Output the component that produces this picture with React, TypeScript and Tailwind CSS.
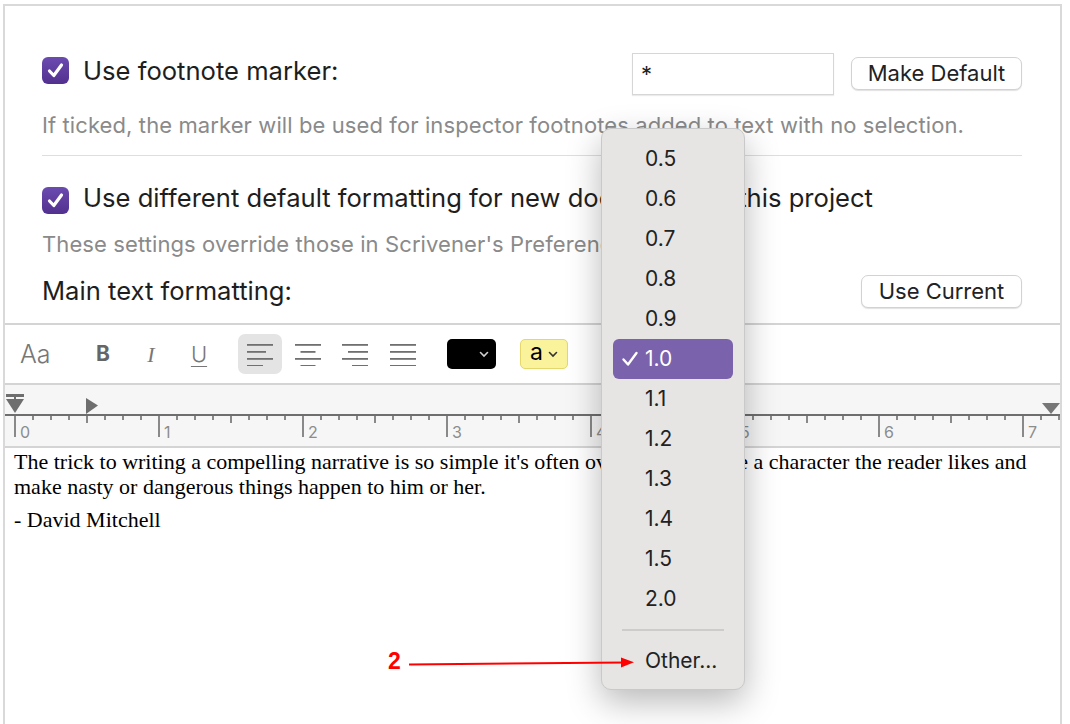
import React from 'react';

const ui = { fontFamily: 'Inter, "Noto Sans", sans-serif' };
const serif = { fontFamily: '"Liberation Serif", "DejaVu Serif", serif' };

const Checkbox = () => (
  <div className="w-[27px] h-[27px] rounded-[6px] bg-gradient-to-b from-[#6b4bb0] to-[#52308f] flex items-center justify-center shrink-0">
    <svg width="19" height="19" viewBox="0 0 19 19">
      <path d="M3.5 10 L7.8 14.5 L15.5 4" fill="none" stroke="white" strokeWidth="3.2" strokeLinecap="round" strokeLinejoin="round" />
    </svg>
  </div>
);

const MacButton = ({ label, w }: { label: string; w: string }) => (
  <div className={`${w} h-[33px] rounded-[7px] bg-white border border-[#d2d2d2] shadow-[0_1px_1px_rgba(0,0,0,0.12)] flex items-center justify-center text-[22px] text-[#222]`}>
    {label}
  </div>
);

// widths of the four lines in each alignment glyph
const AlignIcon = ({ kind }: { kind: 'left' | 'center' | 'right' | 'justify' }) => {
  const widths = {
    left: [26, 19, 26, 16],
    center: [26, 15, 26, 15],
    right: [26, 20, 26, 16],
    justify: [26, 26, 26, 26],
  }[kind];
  return (
    <svg width="26" height="23" viewBox="0 0 26 23">
      {widths.map((w, i) => {
        const x = kind === 'left' || kind === 'justify' ? 0 : kind === 'right' ? 26 - w : (26 - w) / 2;
        return <rect key={i} x={x} y={1 + i * 7} width={w} height="1.8" fill="#707070" />;
      })}
    </svg>
  );
};

const Ruler = () => {
  const origin = 10;
  const inch = 144;
  const ticks = [];
  for (let i = 0; i * 18 + origin < 1055; i++) {
    const x = origin + i * 18;
    const len = i % 8 === 0 ? 22 : i % 4 === 0 ? 8 : 5;
    ticks.push(<rect key={i} x={x - 0.8} y={30} width="1.6" height={len} fill="#6e6e6e" />);
  }
  const labels = [0, 1, 2, 3, 4, 5, 6, 7];
  return (
    <svg width="1055" height="61" viewBox="0 0 1055 61" className="block">
      <rect x="0" y="29" width="1055" height="2" fill="#6e6e6e" />
      {ticks}
      {labels.map((n) => (
        <text key={n} x={origin + n * inch + 5} y="53" fontSize="16" fill="#8c8c8c" fontFamily="Inter, sans-serif">
          {n}
        </text>
      ))}
      {/* tab / left indent marker */}
      <rect x="1" y="9" width="18" height="3" fill="#6e6e6e" />
      <rect x="9" y="11" width="2" height="4" fill="#6e6e6e" />
      <path d="M1 14 L19 14 L10 28 Z" fill="#6e6e6e" />
      {/* first line indent */}
      <path d="M81 13 L93 20.5 L81 29 Z" fill="#6e6e6e" />
      {/* right margin */}
      <path d="M1037 18 L1055 18 L1046 29 Z" fill="#777" />
    </svg>
  );
};

const MenuItem = ({ label, selected }: { label: string; selected?: boolean }) =>
  selected ? (
    <div className="mx-[11px] h-[40px] rounded-[6px] bg-[#7b62ac] flex items-center pl-[8px] text-white text-[21px]">
      <svg width="18" height="18" viewBox="0 0 18 18" className="mr-[6px]">
        <path d="M2.5 9.5 L7 14.5 L15.5 3" fill="none" stroke="white" strokeWidth="2.4" strokeLinecap="round" strokeLinejoin="round" />
      </svg>
      {label}
    </div>
  ) : (
    <div className="h-[40px] flex items-center pl-[43px] text-[21px] text-[#222]">{label}</div>
  );

export default function App() {
  const values = ['0.5', '0.6', '0.7', '0.8', '0.9', '1.0', '1.1', '1.2', '1.3', '1.4', '1.5', '2.0'];

  return (
    <div className="relative w-[1070px] h-[724px] overflow-hidden bg-white" style={ui}>
      <div className="ml-[3px] mt-[4px] w-[1059px] h-[760px] border-2 border-[#d9d9d9]">
        {/* project settings */}
        <div className="pl-[37px] pr-[38px] pt-[47px] pb-[15px]">
          <div className="flex items-center h-[42px]">
            <div className="flex items-center -mt-[6px]">
              <Checkbox />
              <span className="ml-[14px] text-[25.6px] text-[#1e1e1e]">Use footnote marker:</span>
            </div>
            <div className="ml-auto w-[202px] h-[42px] bg-white border border-[#d6d6d6] shadow-[0_1px_1px_rgba(0,0,0,0.08)] flex items-center pl-[8px] text-[22px] text-[#222]">
              *
            </div>
            <div className="ml-[17px] -mt-[2px]">
              <MacButton label="Make Default" w="w-[171px]" />
            </div>
          </div>
          <div className="mt-[18px] h-[24px] leading-[24px] text-[22px] tracking-[0.1px] text-[#8a8a8a] whitespace-nowrap">
            If ticked, the marker will be used for inspector footnotes added to text with no selection.
          </div>
          <div className="mt-[18px] h-px bg-[#dedede]" />
          <div className="mt-[30px] flex items-center h-[28px]">
            <Checkbox />
            <span className="ml-[14px] -mt-[3px] text-[25.6px] text-[#1e1e1e] whitespace-nowrap">
              Use different default formatting for new documents in this project
            </span>
          </div>
          <div className="mt-[18px] h-[24px] leading-[24px] text-[22px] tracking-[0.1px] text-[#8a8a8a] whitespace-nowrap">
            These settings override those in Scrivener's Preferences.
          </div>
          <div className="mt-[19px] flex items-center h-[33px]">
            <span className="text-[25.6px] text-[#1e1e1e]">Main text formatting:</span>
            <div className="ml-auto">
              <MacButton label="Use Current" w="w-[161px]" />
            </div>
          </div>
        </div>

        {/* format bar */}
        <div className="border-t-2 border-b-2 border-[#d4d4d4] h-[62px] flex items-center">
          <div className="ml-[15px] w-[32px] text-[25px] text-[#777] font-light leading-none">Aa</div>
          <div className="ml-[36px] w-[30px] text-center text-[21px] font-bold text-[#666]">B</div>
          <div className="ml-[18px] w-[30px] text-center text-[22px] italic font-light text-[#777]" style={serif}>I</div>
          <div className="ml-[18px] w-[30px] text-center text-[22px] font-light text-[#777] underline underline-offset-4 decoration-1">U</div>
          <div className="ml-[24px] w-[44px] h-[40px] rounded-[7px] bg-[#e4e4e4] flex items-center justify-center">
            <AlignIcon kind="left" />
          </div>
          <div className="ml-[4px] w-[44px] flex justify-center">
            <AlignIcon kind="center" />
          </div>
          <div className="ml-[3px] w-[44px] flex justify-center">
            <AlignIcon kind="right" />
          </div>
          <div className="ml-[4px] w-[44px] flex justify-center">
            <AlignIcon kind="justify" />
          </div>
          <div className="ml-[22px] w-[49px] h-[30px] rounded-[5px] bg-black flex items-center justify-end pr-[7px]">
            <svg width="10" height="7" viewBox="0 0 10 7">
              <path d="M1.5 1.5 L5 5 L8.5 1.5" fill="none" stroke="#d0d0d0" strokeWidth="1.6" strokeLinecap="round" />
            </svg>
          </div>
          <div className="ml-[24px] w-[48px] h-[30px] rounded-[5px] bg-[#faf39b] border border-[#e4d76c] flex items-center justify-center gap-[5px]">
            <span className="text-[23px] leading-none -mt-[4px] text-black">a</span>
            <svg width="10" height="7" viewBox="0 0 10 7">
              <path d="M1.5 1.5 L5 5 L8.5 1.5" fill="none" stroke="#333" strokeWidth="1.6" strokeLinecap="round" />
            </svg>
          </div>
        </div>

        {/* ruler */}
        <div className="bg-[#f6f6f6] border-b-2 border-[#d4d4d4]">
          <Ruler />
        </div>

        {/* text */}
        <div className="pl-[9px] pt-[1px] text-[22px] leading-[25px] text-black" style={serif}>
          <p className="whitespace-nowrap">
            The trick to writing a compelling narrative is so simple it's often overlooked: create a character the reader likes and
          </p>
          <p className="whitespace-nowrap">make nasty or dangerous things happen to him or her.</p>
          <p className="mt-[8px]">- David Mitchell</p>
        </div>
      </div>

      {/* line spacing popup */}
      <div className="absolute left-[601px] top-[128px] w-[144px] h-[562px] rounded-[10px] bg-[#e6e5e4] border border-[#c9c9c9] shadow-[0_12px_34px_rgba(0,0,0,0.28)] py-[10px]">
        {values.map((v) => (
          <MenuItem key={v} label={v} selected={v === '1.0'} />
        ))}
        <div className="h-[22px] flex items-center px-[20px]">
          <div className="h-[2px] w-full bg-[#cdcccb]" />
        </div>
        <MenuItem label="Other..." />
      </div>

      {/* annotation */}
      <div className="absolute left-[388px] top-[650px] text-[23px] font-bold text-[#ff0000] leading-none" style={{ fontFamily: '"Liberation Sans", sans-serif' }}>
        2
      </div>
      <svg className="absolute left-[405px] top-[652px]" width="232" height="20" viewBox="0 0 232 20">
        <path d="M4 12.5 L220 10.5" stroke="#ff0000" strokeWidth="2" />
        <path d="M216 5.5 L229 10.3 L216 15.5 Z" fill="#ff0000" />
      </svg>
    </div>
  );
}
